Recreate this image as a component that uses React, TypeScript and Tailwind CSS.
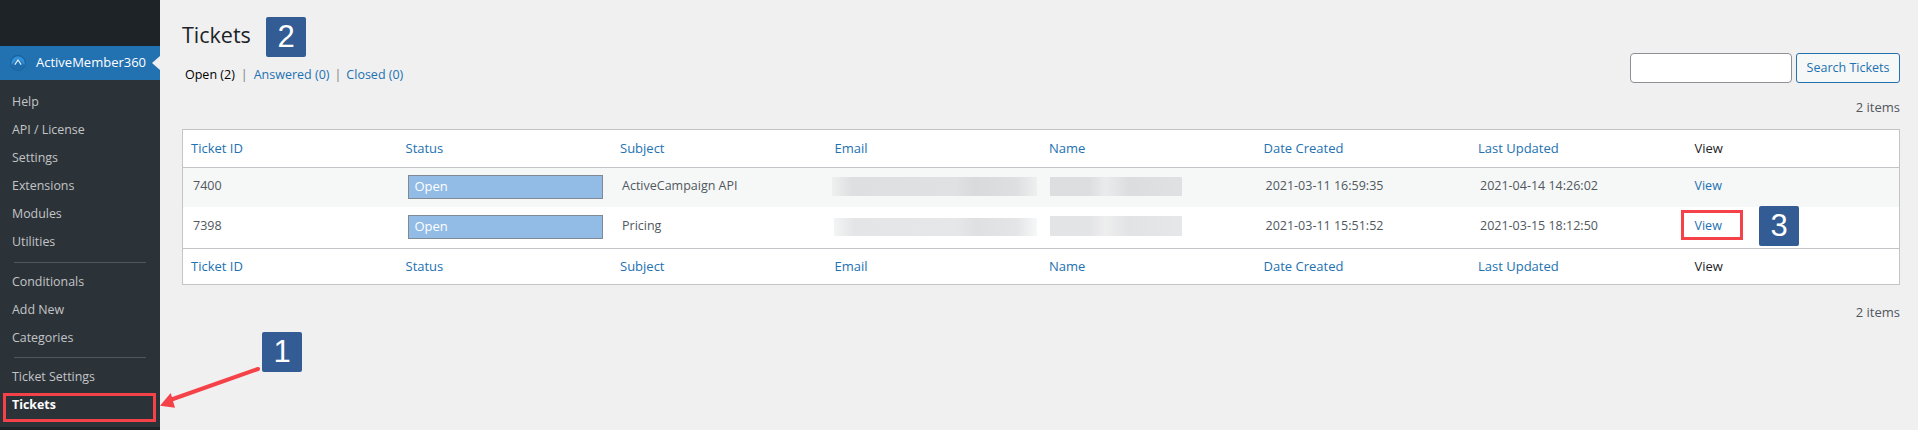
const font = "font-['Open_Sans',_sans-serif]";

const group1 = ["Help", "API / License", "Settings", "Extensions", "Modules", "Utilities"];
const group2 = ["Conditionals", "Add New", "Categories"];
const columns = ["Ticket ID", "Status", "Subject", "Email", "Name", "Date Created", "Last Updated"];

function SideItem({ label, bold }: { label: string; bold?: boolean }) {
  return (
    <div className={"h-[28px] flex items-center pl-[12px] pt-[1px] text-[12.4px] " + (bold ? "font-bold text-white" : "text-[#c3c4c7]")}>
      {label}
    </div>
  );
}

function Badge({ n, className }: { n: string; className: string }) {
  return (
    <div className={"absolute w-[40px] h-[40px] rounded-[2px] bg-[#345c94] flex items-center justify-center text-white text-[31px] font-['Liberation_Sans',_sans-serif] " + className}>
      {n}
    </div>
  );
}

function Blur({ className }: { className: string }) {
  return <div className={"absolute " + className} />;
}

function HeadRow({ cellClass }: { cellClass: string }) {
  return (
    <tr>
      {columns.map((c) => (
        <th key={c} className={"pl-[8px] text-left font-normal text-[13px] text-[#2271b1] " + cellClass}>{c}</th>
      ))}
      <th className={"pl-[10px] text-left font-normal text-[13px] text-[#1d2327] " + cellClass}>View</th>
    </tr>
  );
}

function Row({ id, subject, created, updated, striped, h }: { id: string; subject: string; created: string; updated: string; striped?: boolean; h: string }) {
  const td = "pl-[10px] pb-[1px] text-[12.5px] text-[#50575e] align-middle " + h;
  return (
    <tr className={striped ? "bg-[#f6f7f7]" : "bg-white"}>
      <td className={td}>{id}</td>
      <td className={td}>
        <div className="h-[24px] w-[195px] border border-[#7f8a94] bg-[#92bce6] text-white flex items-center pl-[6px] text-[13px]">Open</div>
      </td>
      <td className={td}>{subject}</td>
      <td className={td}></td>
      <td className={td}></td>
      <td className={td}>{created}</td>
      <td className={td}>{updated}</td>
      <td className={"pl-[10px] pb-[1px] text-[12.5px] text-[#2271b1] align-middle " + h}>View</td>
    </tr>
  );
}

export default function App() {
  return (
    <div className={"relative flex w-[1918px] h-[430px] overflow-hidden bg-[#f0f0f1] " + font}>
      <aside className="w-[160px] h-[430px] bg-[#2c3338] flex flex-col shrink-0">
        <div className="h-[46px] bg-[#1d2327]" />
        <div className="relative h-[34px] bg-[#2271b1] flex items-center pl-[10px] text-white text-[13px]">
          <svg width="16" height="16" viewBox="0 0 16 16" className="mr-[10px] shrink-0">
            <circle cx="8" cy="8" r="7.4" fill="#2f8fd8" stroke="#1a5f9c" strokeWidth="1.1" />
            <path d="M1.2 10.6 L8 3.6 L14.8 10.6 A7.4 7.4 0 0 1 1.2 10.6Z" fill="#1e6cab" />
            <path d="M4.8 9.6 L8 5 L11.2 9.6" fill="none" stroke="#d6ecff" strokeWidth="1.3" />
          </svg>
          <span>ActiveMember360</span>
          <div className="absolute right-0 top-[10px] w-0 h-0 border-y-[7px] border-y-transparent border-r-[8px] border-r-[#f0f0f1]" />
        </div>
        <div className="h-[8px]" />
        {group1.map((l) => <SideItem key={l} label={l} />)}
        <div className="mx-[14px] mt-[6px] mb-[5px] h-px bg-[#50575e]" />
        {group2.map((l) => <SideItem key={l} label={l} />)}
        <div className="mx-[14px] mt-[5px] mb-[5px] h-px bg-[#50575e]" />
        <SideItem label="Ticket Settings" />
        <SideItem label="Tickets" bold />
        <div className="mt-auto h-[3px] bg-[#1d2327]" />
      </aside>

      <main className="flex-1 pl-[22px] pr-[18px] pt-[17px]">
        <h1 className="h-[36px] leading-[36px] text-[21.5px] text-[#1d2327] font-normal">Tickets</h1>
        <div className="flex justify-between items-start h-[30px]">
          <div className="pt-[13px] pl-[3px] text-[12.5px] leading-[18px] flex">
            <span className="text-black">Open (2)</span>
            <span className="text-[#787c82] px-[6px]">|</span>
            <span className="text-[#2271b1]">Answered (0)</span>
            <span className="text-[#787c82] px-[5px]">|</span>
            <span className="text-[#2271b1]">Closed (0)</span>
          </div>
          <div className="flex gap-[4px]">
            <input className="w-[162px] h-[30px] bg-white border border-[#8c8f94] rounded-[4px]" />
            <button className="w-[104px] h-[30px] bg-[#f6f7f7] border border-[#2271b1] rounded-[3px] text-[#2271b1] text-[12.5px]">Search Tickets</button>
          </div>
        </div>
        <div className="mt-[15px] h-[18px] leading-[18px] text-right text-[13px] text-[#50575e]">2 items</div>
        <div className="mt-[13px] border border-[#c3c4c7] bg-white">
          <table className="w-full table-fixed border-collapse">
            <thead>
              <HeadRow cellClass="h-[37px] border-b border-[#c3c4c7]" />
            </thead>
            <tbody>
              <Row id="7400" subject="ActiveCampaign API" created="2021-03-11 16:59:35" updated="2021-04-14 14:26:02" striped h="h-[40px]" />
              <Row id="7398" subject="Pricing" created="2021-03-11 15:51:52" updated="2021-03-15 18:12:50" h="h-[41px]" />
            </tbody>
            <tfoot>
              <HeadRow cellClass="h-[36px] pt-[1px] border-t border-[#c3c4c7]" />
            </tfoot>
          </table>
        </div>
        <div className="mt-[18px] h-[18px] leading-[18px] text-right text-[13px] text-[#50575e]">2 items</div>
      </main>

      <Blur className="left-[832px] top-[177px] w-[205px] h-[19px] bg-[linear-gradient(90deg,#eeefef_0%,#dedfe1_10%,#e0e1e3_60%,#d9dadc_70%,#dedfe1_90%,#eeefef_100%)]" />
      <Blur className="left-[1050px] top-[177px] w-[132px] h-[19px] bg-[linear-gradient(90deg,#dddee0_0%,#dddee0_30%,#eaebec_42%,#dcdddf_60%,#e0e1e3_100%)]" />
      <Blur className="left-[834px] top-[218px] w-[203px] h-[18px] bg-[linear-gradient(90deg,#f3f4f4_0%,#e4e5e7_10%,#e6e7e9_60%,#dfe0e2_70%,#e4e5e7_90%,#f6f7f7_100%)]" />
      <Blur className="left-[1050px] top-[216px] w-[132px] h-[20px] bg-[linear-gradient(90deg,#e3e4e6_0%,#e3e4e6_30%,#eeeeef_42%,#e2e3e5_60%,#e6e7e9_100%)]" />

      <Badge n="2" className="left-[266px] top-[17px]" />
      <Badge n="1" className="left-[262px] top-[332px]" />
      <Badge n="3" className="left-[1759px] top-[206px]" />

      <div className="absolute left-[3px] top-[393px] w-[153px] h-[29px] border-[3px] border-[#f44248]" />
      <div className="absolute left-[1681px] top-[210px] w-[62px] h-[30px] border-[3px] border-[#f44248]" />

      <svg className="absolute left-[155px] top-[360px]" width="110" height="60" viewBox="0 0 110 60">
        <path d="M103 9 L18 39" stroke="#f44248" strokeWidth="4" strokeLinecap="round" fill="none" />
        <path d="M5 45.7 L15.7 33 L20 47.7 Z" fill="#f44248" />
      </svg>
    </div>
  );
}
